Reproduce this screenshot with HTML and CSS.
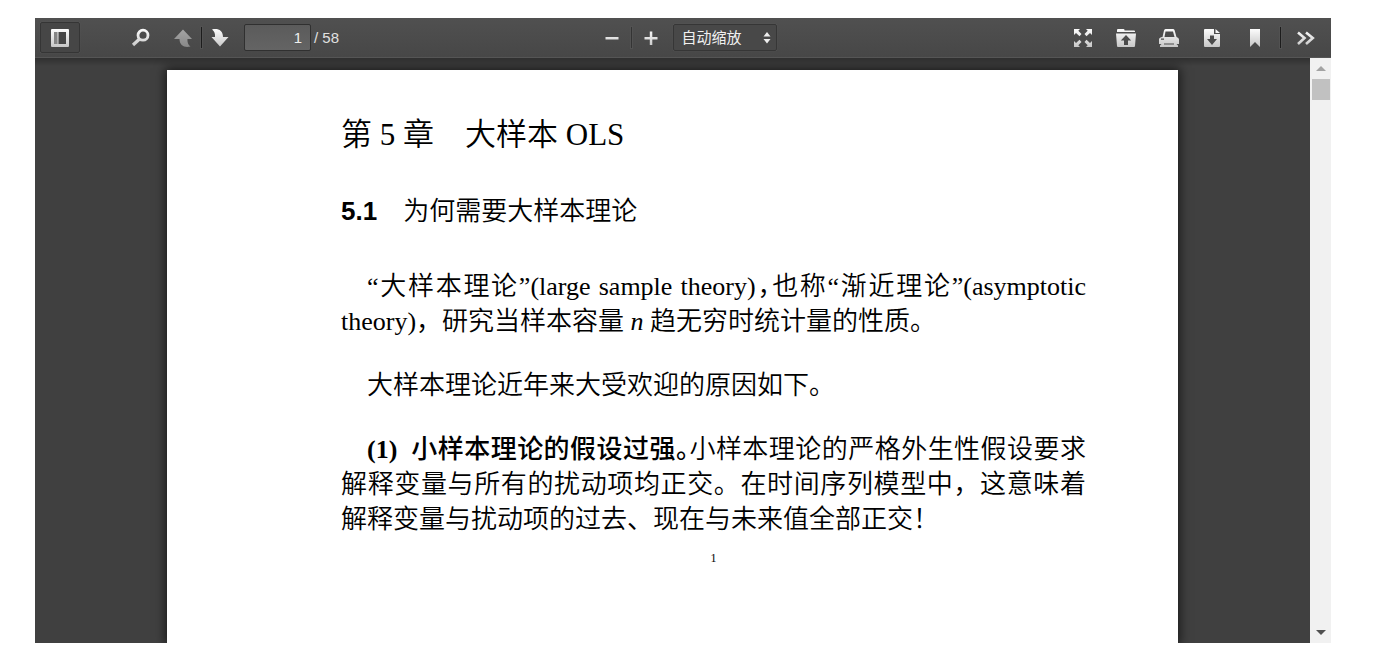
FILE: index.html
```html
<!DOCTYPE html>
<html lang="zh-CN">
<head>
<meta charset="utf-8">
<title>第 5 章 大样本 OLS</title>
<link rel="stylesheet" href="styles.css">
</head>
<body>
<svg class="defs" aria-hidden="true"><defs>
<linearGradient id="metal" gradientUnits="userSpaceOnUse" x1="0" y1="0" x2="0" y2="20"><stop offset="0" stop-color="#fff"/><stop offset="1" stop-color="#c4c4c4"/></linearGradient>
</defs></svg>
<div class="viewer">
  <header class="toolbar">
    <div class="group">
      <button class="tool toggled" aria-label="切换侧栏"><svg class="icon" viewBox="0 0 20 20"><path fill-rule="evenodd" d="M2 1h16q1 0 1 1v16q0 1-1 1H2q-1 0-1-1V2q0-1 1-1zM8.500 4v12H16V4z"/><path d="M4 4h3.500v12H4z" fill="#858585"/></svg></button>
      <button class="tool search" aria-label="查找"><svg class="icon" viewBox="0 0 20 20"><g fill="none" stroke="url(#metal)"><circle cx="12" cy="7.200" r="5" stroke-width="2.800"/><path d="M8.300 11.200 2 17" stroke-width="3.200"/></g></svg></button>
      <button class="tool narrow" disabled aria-label="上一页"><svg class="icon" viewBox="0 0 20 20"><path d="M10 1.500 19 11h-4.500c-.3 3.500.5 5.500 3 7.500-6 1.500-11-1-11-7.500H1z"/></svg></button>
      <span class="separator dark"></span>
      <button class="tool narrow" aria-label="下一页"><svg class="icon" viewBox="0 0 20 20"><path d="M2 1.500c6-1.500 11 1 11 7.500h5.500L10 18.500 1.500 9H5c.3-3.500-.5-5.500-3-7.500z"/></svg></button>
      <input class="page-number" id="page" type="text" value="1">
      <label class="page-total" for="page">/ 58</label>
    </div>
    <div class="group zoom">
      <button class="tool narrow" aria-label="缩小"><svg class="icon" viewBox="0 0 20 20"><path d="M3.500 9h13v2.500h-13z"/></svg></button>
      <span class="separator"></span>
      <button class="tool narrow" aria-label="放大"><svg class="icon" viewBox="0 0 20 20"><path d="M8.800 3.500h2.500V9h5.200v2.500h-5.200V17H8.800v-5.500H3.500V9h5.300z"/></svg></button>
      <div class="scale"><select aria-label="缩放"><option>自动缩放</option></select><svg class="updown" viewBox="0 0 8 12"><path d="M4 0 7.500 4.500h-7zM4 11.500.5 7h7z"/></svg></div>
    </div>
    <div class="group actions">
      <button class="tool" aria-label="演示模式"><svg class="icon" viewBox="0 0 20 20"><path d="M1 1h6L5.300 2.700 8.500 6 6.500 8.300 3 5 1 7zM19 1v6l-2-2-3.500 3.300L11.500 6l3.200-3.300L13 1zM1 19v-6l2 2 3.500-3.300L8.500 14l-3.200 3.300L7 19zM19 19h-6l1.700-1.700L11.500 14l2-2.300L17 15l2-2z"/></svg></button>
      <button class="tool" aria-label="打开文件"><svg class="icon" viewBox="0 0 20 20"><path d="M1 4V2q0-1 1-1h5.500q1 0 1 1v.5H18q1 0 1 1V4z"/><path fill-rule="evenodd" d="M0 5.500h20L19 18q0 1-1 1H2q-1 0-1-1zM10 7 4.800 12.500H8V17h4v-4.500h3.200z"/></svg></button>
      <button class="tool" aria-label="打印"><svg class="icon" viewBox="0 0 20 20"><path fill-rule="evenodd" d="M3.500 9 5 2.500Q5.300 1 6.500 1H14q1 0 1.500 1L17.500 9q2.500.5 2.500 2.500V16h-2.500l1.500 1.500V19H1v-1.500L2.500 16H0v-4.500Q0 9.500 3.500 9zM6.500 3.500 5.500 9h10L14 3.500zM2 10.500v1.200h3v-1.200zM5 15.500v1h10v-1z"/></svg></button>
      <button class="tool" aria-label="下载"><svg class="icon" viewBox="0 0 20 20"><path fill-rule="evenodd" d="M3 1h9v5h6v12q0 1-1 1H3q-1 0-1-1V2q0-1 1-1zM8 7.500V11H5l5 6 5-6h-3V7.500z"/><path d="M13.500 1 18 5h-4.500z"/></svg></button>
      <button class="tool" aria-label="书签"><svg class="icon" viewBox="0 0 20 20"><path d="M5 1h10v18l-5-5-5 5z"/></svg></button>
      <span class="separator dark wide"></span>
      <button class="tool" aria-label="工具"><svg class="icon" viewBox="0 0 20 20"><path fill="none" stroke="url(#metal)" stroke-width="2.600" d="M2 4.500 8.500 10 2 16M10 4.500 16.800 10 10 16"/></svg></button>
    </div>
  </header>
  <div class="content">
    <main class="canvas">
      <article class="page">
        <h1>第 5 章　大样本 OLS</h1>
        <h2><b>5.1</b>　为何需要大样本理论</h2>
        <p>“大样本理论”(large sample theory)<span class="half">，</span>也称“渐近理论”(asymptotic theory)，研究当样本容量 <i>n</i> 趋无穷时统计量的性质。</p>
        <p>大样本理论近年来大受欢迎的原因如下。</p>
        <p><b>(1)&nbsp; </b><strong>小样本理论的假设过强<span class="half">。</span></strong>小样本理论的严格外生性假设要求解释变量与所有的扰动项均正交。在时间序列模型中，这意味着解释变量与扰动项的过去、现在与未来值全部正交！</p>
        <footer>1</footer>
      </article>
    </main>
    <div class="scrollbar">
      <button class="arrow" aria-label="向上滚动"><svg viewBox="0 0 10 5"><path d="M5 0l5 5H0z" fill="#a3a3a3"/></svg></button>
      <div class="track"><div class="thumb"></div></div>
      <button class="arrow" aria-label="向下滚动"><svg viewBox="0 0 10 5"><path d="M0 0h10L5 5z" fill="#505050"/></svg></button>
    </div>
  </div>
</div>
</body>
</html>
```
FILE: styles.css
```css
* { box-sizing: border-box; }
body {
  margin: 0;
  height: 100vh;
  padding: 18px 43px 28px 35px;
  background: #fff;
  overflow: hidden;
}
.defs { position: absolute; width: 0; height: 0; }
button { border: 0; padding: 0; background: none; }
.viewer { display: flex; flex-direction: column; height: 100%; background: #404040; overflow: hidden; }

.toolbar {
  display: grid;
  grid-template-columns: 1fr auto 1fr;
  align-items: center;
  height: 40px;
  padding: 0 5px;
  background: linear-gradient(#505050, #474747);
  border-bottom: 1px solid #555;
  box-shadow: 0 1px 0 #303030;
  color: #e0e0e0;
  font: 15px "Liberation Sans", "Noto Sans CJK SC", sans-serif;
}
.group { display: flex; align-items: center; }
.zoom { padding-left: 4px; gap: 1px; }
.actions { justify-content: flex-end; gap: 3px; }
.tool { display: grid; place-items: center; width: 40px; height: 31px; border-radius: 2px; }
.tool.narrow { width: 36px; }
.tool.search { margin: 0 4px 0 41px; }
.tool.toggled { background: #464646; border: 1px solid #353535; box-shadow: 0 0 1px #666; }
.tool:disabled { opacity: .5; }
.icon { width: 20px; height: 20px; fill: url(#metal); }
.separator { width: 1px; height: 21px; background: #343434; box-shadow: 0 0 0 1px #525252; }
.separator.dark { background: #1c1c1c; }
.separator.wide { margin: 0 2px; }
.page-number {
  width: 67px;
  height: 27px;
  margin: 0 3px 0 6px;
  padding: 0 8px;
  border: 1px solid #303030;
  border-radius: 2px;
  background: linear-gradient(#5b5b5b, #646464);
  color: #eee;
  font: inherit;
  text-align: right;
}
.scale { display: flex; align-items: center; position: relative; margin-left: 3px; }
.scale select {
  appearance: none;
  width: 104px;
  height: 27px;
  padding: 0 8px;
  border: 1px solid #363636;
  border-radius: 2px;
  background: #484848;
  box-shadow: 0 0 1px #666;
  color: #f0f0f0;
  font: inherit;
}
.updown { position: absolute; right: 6px; width: 8px; height: 12px; fill: #eee; pointer-events: none; }

.content { display: flex; flex: 1; min-height: 0; }
.canvas {
  flex: 1;
  padding: 12px 132px 0;
  overflow: hidden;
  background: linear-gradient(#303030, #404040 8px);
}
.page {
  min-height: 100%;
  padding: 44px 92px 76px 174px;
  background: #fff;
  box-shadow: 0 0 10px 2px rgba(0, 0, 0, .6);
  color: #000;
  font: 350 26px/35px "Liberation Serif", "Noto Sans CJK SC", serif;
}
h1 { margin: 0; font-size: 31px; font-weight: 350; line-height: 42px; }
h2 { margin: 38px 0 40px; font-size: 26px; font-weight: 350; line-height: 35px; }
h2 b { font-family: "Liberation Sans", sans-serif; font-weight: 700; }
p { margin: 0 0 29px; text-indent: 26px; text-align: justify; }
p b { font-weight: 700; }
strong { font-weight: 500; }
.half { font-feature-settings: "halt"; }
footer { margin-top: -16px; font-size: 12px; line-height: 16px; text-align: center; }

.scrollbar { display: flex; flex-direction: column; width: 21px; background: #f1f1f1; }
.arrow { display: grid; place-items: center; height: 21px; }
.arrow svg { width: 10px; height: 5px; }
.track { flex: 1; padding: 0 1px 0 2px; }
.thumb { height: 21px; background: #c1c1c1; }
```
